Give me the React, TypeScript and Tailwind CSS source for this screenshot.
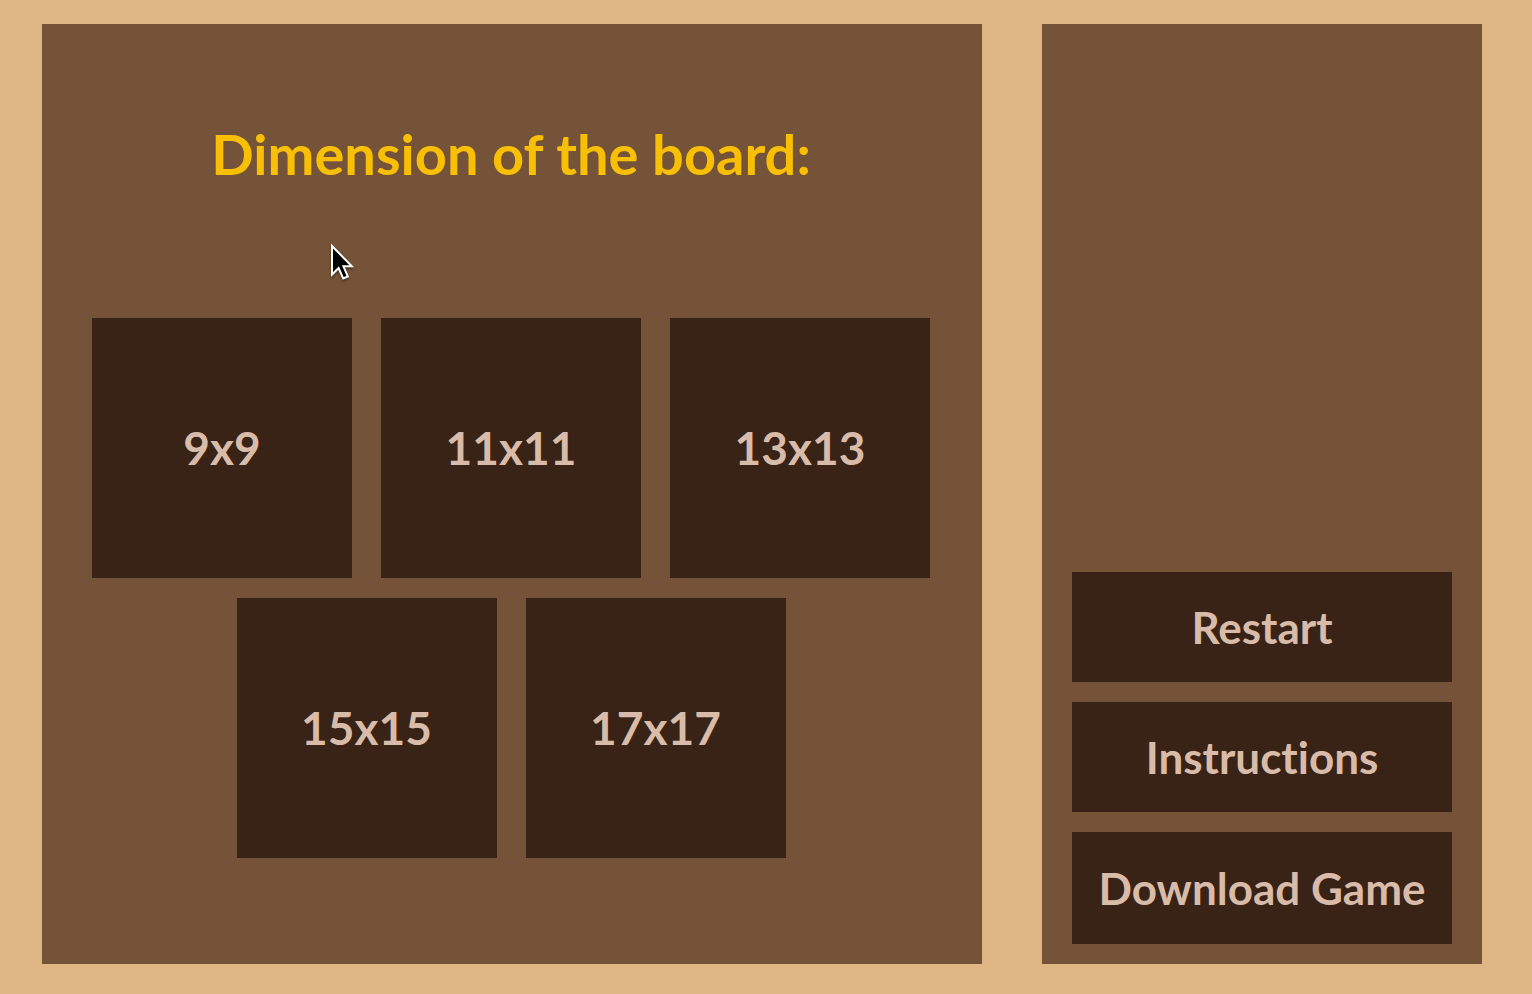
const boardSizes = [9, 11, 13, 15, 17];
const actions = ["Restart", "Instructions", "Download Game"];

function Pointer() {
  return (
    <svg
      aria-hidden="true"
      viewBox="0 0 28 44"
      className="pointer-events-none absolute top-[217px] left-[287px] h-[44px] w-[28px] drop-shadow-[0_2px_1px_rgba(0,0,0,0.35)]"
    >
      <path
        d="M3 5V33.5L9.6 27L14.2 37.4L18.8 35.4L14.4 25.3H22.8Z"
        fill="#000"
        stroke="#fff"
        strokeWidth="2"
      />
    </svg>
  );
}

export default function App() {
  return (
    <div className="grid min-h-screen grid-cols-[minmax(0,940fr)_minmax(0,440fr)] gap-[60px] bg-[#deb785] pt-6 pr-[50px] pb-[30px] pl-[42px] font-['Gill_Sans','Lato',sans-serif] font-bold text-[#d8bba8] [font-variant-ligatures:none]">
      <main className="relative flex flex-col items-center bg-[#755338] pt-24 pr-[52px] pb-[106px] pl-[50px]">
        <h1 className="text-center text-[56px] leading-[68px] text-[#f8bf04]">Dimension of the board:</h1>
        <div className="mt-[130px] flex flex-wrap justify-center gap-x-[29px] gap-y-5">
          {boardSizes.map((size) => (
            <button key={size} type="button" className="size-[260px] bg-[#382316] text-[46px] leading-[60px]">
              {size}x{size}
            </button>
          ))}
        </div>
        <Pointer />
      </main>
      <aside className="flex flex-col justify-end gap-5 bg-[#755338] px-[30px] pb-5">
        {actions.map((label) => (
          <button key={label} type="button" className="h-[110px] bg-[#382316] text-[44px] leading-[60px] last:h-[112px]">
            {label}
          </button>
        ))}
      </aside>
    </div>
  );
}
